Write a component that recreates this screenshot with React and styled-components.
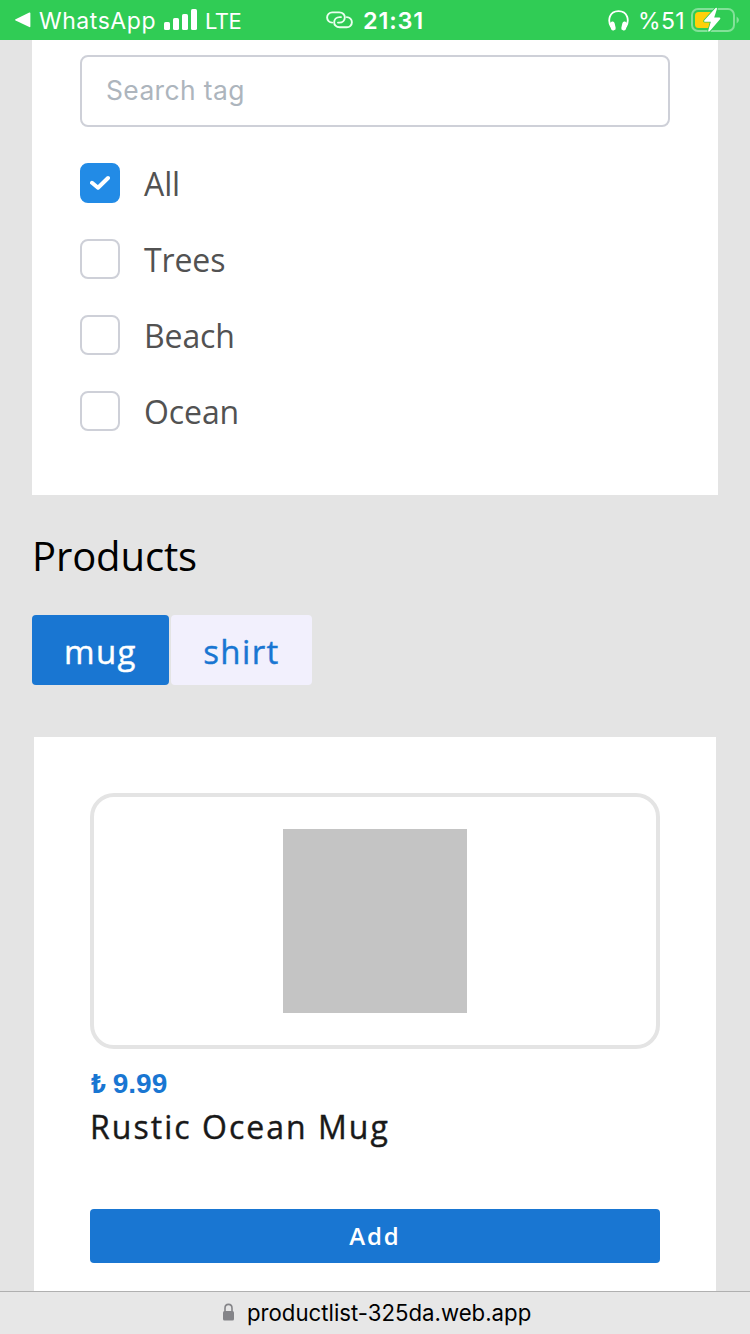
import React from 'react';
import styled, { createGlobalStyle } from 'styled-components';

const GlobalStyle = createGlobalStyle`
  * { box-sizing: border-box; }
  body { margin: 0; background: #e4e4e4; overflow: hidden; }
  button { border: 0; padding: 0; }
`;

const sans = `'Open Sans', sans-serif`;
const system = `Inter, 'Liberation Sans', sans-serif`;

const Screen = styled.div`
  width: 750px;
  height: 1334px;
  overflow: hidden;
  display: flex;
  flex-direction: column;
  background: #e4e4e4;
  font-family: ${sans};
`;

const StatusBar = styled.header`
  flex: none;
  height: 40px;
  display: grid;
  grid-template-columns: 326px 1fr 142px;
  align-items: center;
  background: #30cc55;
  color: #fff;
  font: 400 23px/40px ${system};
`;

const StatusGroup = styled.div`
  display: flex;
  align-items: center;
  height: 40px;
  padding-left: ${(p) => p.$inset || 0}px;
  svg { flex: none; display: block; }
`;

const StatusText = styled.span`
  margin-left: ${(p) => p.$gap || 0}px;
  font-weight: ${(p) => p.$weight || 400};
  font-size: ${(p) => p.$size || 23}px;
  letter-spacing: ${(p) => p.$track || 0}px;
  padding-top: 1px;
  white-space: nowrap;
`;

const SignalStrength = styled.span`
  display: flex;
  margin-left: 8px;
`;

const Page = styled.main`
  flex: 1;
  min-height: 0;
  overflow: hidden;
  padding: 0 32px;
`;

const FilterPanel = styled.section`
  height: 455px;
  padding: 15px 48px 0;
  background: #fff;
`;

const SearchInput = styled.input`
  display: block;
  width: 590px;
  height: 72px;
  padding: 0 24px 2px;
  border: 2px solid #ced0d8;
  border-radius: 8px;
  background: #fff;
  font: 400 26.4px ${system};
  letter-spacing: 0.4px;
  outline: none;
  &::placeholder { color: #adb5bd; opacity: 1; }
`;

const TagList = styled.div`
  display: grid;
  gap: 36px;
  margin-top: 36px;
`;

const TagRow = styled.label`
  display: flex;
  align-items: center;
  gap: 24px;
  height: 40px;
`;

const CheckBox = styled.span`
  display: flex;
  align-items: center;
  justify-content: center;
  width: 40px;
  height: 40px;
  border: 2px solid ${(p) => (p.$checked ? '#228be6' : '#ced0d8')};
  border-radius: 8px;
  background: ${(p) => (p.$checked ? '#228be6' : '#fff')};
`;

const TagName = styled.span`
  padding-top: 2px;
  font-size: 32px;
  letter-spacing: -0.1px;
  line-height: 40px;
  color: #525252;
`;

const Heading = styled.h1`
  margin: 34px 0 0;
  font-size: 40px;
  letter-spacing: -0.12px;
  line-height: 54px;
  font-weight: 400;
  color: #000;
`;

const Tabs = styled.div`
  display: flex;
  gap: 2px;
  margin-top: 32px;
`;

const Tab = styled.button`
  width: ${(p) => p.$width}px;
  height: 70px;
  padding: 3px 0 0;
  border-radius: 4px;
  background: ${(p) => (p.$active ? '#1976d2' : '#f2f0fd')};
  color: ${(p) => (p.$active ? '#fff' : '#1976d2')};
  font: 500 33px/67px ${sans};
  letter-spacing: 1.4px;
  -webkit-text-stroke: 0.4px currentColor;
`;

const ProductCard = styled.article`
  width: 682px;
  height: 600px;
  margin: 52px 2px 0;
  padding: 56px 56px 0;
  background: #fff;
`;

const ImageFrame = styled.div`
  display: flex;
  align-items: center;
  justify-content: center;
  height: 256px;
  border: 4px solid #e4e4e4;
  border-radius: 24px;
`;

const ImagePlaceholder = styled.div`
  width: 184px;
  height: 184px;
  background: #c4c4c4;
`;

const Price = styled.div`
  display: flex;
  align-items: center;
  gap: 6px;
  height: 40px;
  margin-top: 15px;
  color: #1976d2;
  font: 700 28px/40px 'Liberation Sans', sans-serif;
`;

const Lira = styled.span`
  font: 700 26px/40px ${system};
`;

const ProductName = styled.h2`
  margin: 1px 0 0;
  color: #191919;
  font: 500 32px/44px ${sans};
  letter-spacing: 2.03px;
  -webkit-text-stroke: 0.4px currentColor;
`;

const AddButton = styled.button`
  display: block;
  width: 570px;
  height: 54px;
  margin-top: 60px;
  border-radius: 4px;
  background: #1976d2;
  color: #fff;
  font: 600 24px/54px ${sans};
  letter-spacing: 1.9px;
`;

const AddressBar = styled.footer`
  flex: none;
  display: flex;
  align-items: center;
  height: 43px;
  padding-left: 222px;
  gap: 12px;
  border-top: 1px solid #b0b0b0;
  background: #e7e7e7;
  color: #000;
  font: 400 22.2px/42px ${system};
  svg { display: block; }
`;

const BackIcon = () => (
  <svg width="16" height="16" viewBox="0 0 16 16" fill="#fff">
    <path d="M0.6 7.2 14.3 .5Q15.4 .2 15.4 1.4V14.2Q15.4 15.5 14.3 15L.6 8.6Q-.5 7.9 .6 7.2Z" />
  </svg>
);

const SignalIcon = () => (
  <svg width="34" height="22" viewBox="0 0 34 22" fill="#fff">
    <rect x="0" y="13" width="6" height="8" rx="1.6" />
    <rect x="9" y="9" width="6" height="12" rx="1.6" />
    <rect x="18" y="5" width="6" height="16" rx="1.6" />
    <rect x="27" y="0" width="6" height="21" rx="1.6" />
  </svg>
);

const LinkIcon = () => (
  <svg width="28" height="18" viewBox="0 0 28 18" fill="none" stroke="#e9ffee" strokeWidth="1.9" strokeLinecap="round">
    <path d="M6.2 11.6A5.1 5.1 0 0 1 6.2 1.4H13.2C21 1.4 20.4 11.6 13.2 11.6H12" />
    <path d="M20.8 6.1A5.1 5.1 0 0 1 20.8 16.3H13.8C6 16.3 6.6 6.1 13.8 6.1H15" />
  </svg>
);

const HeadphonesIcon = () => (
  <svg width="21" height="21" viewBox="0 0 21 21">
    <path d="M3.2 17C-.7 10.5 1.2 1.2 10.5 1.2S21.7 10.5 17.8 17" fill="none" stroke="#fff" strokeWidth="1.8" />
    <rect x="2.4" y="11.5" width="4.8" height="9" rx="2.2" fill="#fff" transform="rotate(-13 4.8 16)" />
    <rect x="13.8" y="11.5" width="4.8" height="9" rx="2.2" fill="#fff" transform="rotate(13 16.2 16)" />
  </svg>
);

const BatteryIcon = () => (
  <svg width="50" height="28" viewBox="0 0 50 28">
    <rect x="1" y="3" width="42" height="22" rx="6" fill="none" stroke="#83e199" strokeWidth="2" />
    <path d="M45.6 10.6Q48 12.2 48 14T45.6 17.6Z" fill="#83e199" />
    <path d="M7.5 6H21V22H7.5Q4 22 4 18.5V9.5Q4 6 7.5 6Z" fill="#ffd00a" />
    <path d="M24.3 2.2 13.2 14.5Q12.6 15.7 13.9 15.8H19.8L17.2 24.8Q17.3 26.4 18.7 25.3L29.2 13.1Q29.8 11.8 28.5 11.6H23.2L26 2.8Q25.8 1.2 24.3 2.2Z" fill="#fff" stroke="#30cc55" strokeWidth="1.6" paintOrder="stroke" />
  </svg>
);

const CheckIcon = () => (
  <svg width="20" height="16" viewBox="0 0 20 16" fill="none" stroke="#fff" strokeWidth="4" strokeLinecap="round" strokeLinejoin="round">
    <path d="M2 7.8 8 12.7 18 3" />
  </svg>
);

const LockIcon = () => (
  <svg width="13" height="20" viewBox="0 0 13 20">
    <path d="M3 9V5.2C3 .1 10 .1 10 5.2V9" fill="none" stroke="#848488" strokeWidth="1.6" />
    <rect x="1" y="8" width="11" height="9.5" rx="1.6" fill="#848488" />
  </svg>
);

const tags = ['All', 'Trees', 'Beach', 'Ocean'];

export default function App() {
  return (
    <Screen>
      <GlobalStyle />
      <StatusBar>
        <StatusGroup $inset={15}>
          <BackIcon />
          <StatusText $gap={8} $track={0.55}>WhatsApp</StatusText>
          <SignalStrength><SignalIcon /></SignalStrength>
          <StatusText $gap={7} $size={22} $track={-0.6}>LTE</StatusText>
        </StatusGroup>
        <StatusGroup>
          <LinkIcon />
          <StatusText $gap={9} $weight={600} $size={23.5} $track={0.8}>21:31</StatusText>
        </StatusGroup>
        <StatusGroup>
          <HeadphonesIcon />
          <StatusText $gap={9} $track={0.3}>%51</StatusText>
          <StatusGroup $inset={6}><BatteryIcon /></StatusGroup>
        </StatusGroup>
      </StatusBar>
      <Page>
        <FilterPanel>
          <SearchInput placeholder="Search tag" />
          <TagList>
            {tags.map((tag) => (
              <TagRow key={tag}>
                <CheckBox $checked={tag === 'All'}>{tag === 'All' && <CheckIcon />}</CheckBox>
                <TagName>{tag}</TagName>
              </TagRow>
            ))}
          </TagList>
        </FilterPanel>
        <Heading>Products</Heading>
        <Tabs>
          <Tab $active $width={137}>mug</Tab>
          <Tab $width={141}>shirt</Tab>
        </Tabs>
        <ProductCard>
          <ImageFrame><ImagePlaceholder /></ImageFrame>
          <Price><Lira>₺</Lira>9.99</Price>
          <ProductName>Rustic Ocean Mug</ProductName>
          <AddButton>Add</AddButton>
        </ProductCard>
      </Page>
      <AddressBar>
        <LockIcon />
        <span>productlist-325da.web.app</span>
      </AddressBar>
    </Screen>
  );
}
